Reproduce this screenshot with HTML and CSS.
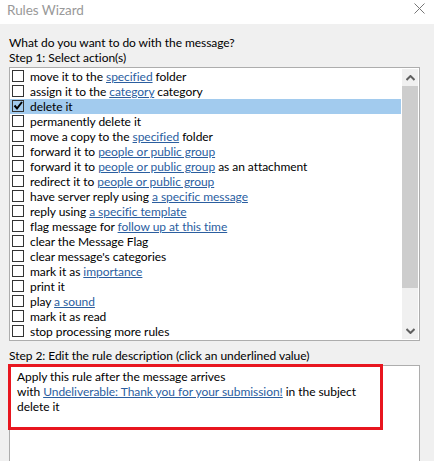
FILE: index.html
```html
<!DOCTYPE html>
<html>
<head>
<meta name="viewport" content="width=device-width, initial-scale=1">
<link rel="stylesheet" href="styles.css">
</head>
<body>

<div class="titlebar">
  <span class="title">Rules Wizard</span>
  <span class="closeBtn">
    <svg width="11" height="11" viewBox="0 0 11 11"><path d="M0.5 0.5 L10.5 10.5 M10.5 0.5 L0.5 10.5" stroke="#777" stroke-width="1" fill="none"/></svg>
  </span>
</div>

<div class="content">
  <div class="label">What do you want to do with the message?</div>
  <div class="label">Step 1: Select action(s)</div>

  <div class="listbox">
    <ul class="actions">
      <li><span class="check"></span>move it to the <a>specified</a> folder</li>
      <li><span class="check"></span>assign it to the <a>category</a> category</li>
      <li class="selected"><span class="check"><svg width="10" height="10" viewBox="0 0 10 10"><path d="M1.5 4.5 L4 7.5 L9 1" stroke="#000" stroke-width="2" fill="none"/></svg></span>delete it</li>
      <li><span class="check"></span>permanently delete it</li>
      <li><span class="check"></span>move a copy to the <a>specified</a> folder</li>
      <li><span class="check"></span>forward it to <a>people or public group</a></li>
      <li><span class="check"></span>forward it to <a>people or public group</a> as an attachment</li>
      <li><span class="check"></span>redirect it to <a>people or public group</a></li>
      <li><span class="check"></span>have server reply using <a>a specific message</a></li>
      <li><span class="check"></span>reply using <a>a specific template</a></li>
      <li><span class="check"></span>flag message for <a>follow up at this time</a></li>
      <li><span class="check"></span>clear the Message Flag</li>
      <li><span class="check"></span>clear message's categories</li>
      <li><span class="check"></span>mark it as <a>importance</a></li>
      <li><span class="check"></span>print it</li>
      <li><span class="check"></span>play <a>a sound</a></li>
      <li><span class="check"></span>mark it as read</li>
      <li><span class="check"></span>stop processing more rules</li>
    </ul>
    <div class="scrollbar">
      <div class="arrow">
        <svg width="9" height="6" viewBox="0 0 9 6"><path d="M0.5 5 L4.5 1 L8.5 5" stroke="#606060" stroke-width="2" fill="none"/></svg>
      </div>
      <div class="thumb"></div>
      <div class="track"></div>
      <div class="arrow">
        <svg width="9" height="6" viewBox="0 0 9 6"><path d="M0.5 1 L4.5 5 L8.5 1" stroke="#606060" stroke-width="2" fill="none"/></svg>
      </div>
    </div>
  </div>

  <div class="label step2">Step 2: Edit the rule description (click an underlined value)</div>

  <div class="descbox">
    <div class="desc">
      <div>Apply this rule after the message arrives</div>
      <div>with <a>Undeliverable: Thank you for your submission!</a> in the subject</div>
      <div>delete it</div>
    </div>
    <div class="highlight"></div>
  </div>
</div>

</body>
</html>
```

FILE: styles.css
```css
* {
  box-sizing: border-box;
}

body {
  margin: 0;
  width: 434px;
  height: 461px;
  overflow: hidden;
  background: #f0f0f0;
  font-family: Lato, "Noto Sans", sans-serif;
  font-size: 12px;
  letter-spacing: -0.05px;
  color: #000;
}

/* window title */
.titlebar {
  height: 24px;
  background: #fff;
  display: flex;
  align-items: center;
  justify-content: space-between;
  padding: 0 9px 0 7px;
}

.title {
  color: #999;
  font-size: 13.5px;
  margin-top: -4px;
}

.closeBtn {
  display: flex;
  margin-top: -8px;
}

.content {
  padding: 11px 14px 0 9px;
}

.label {
  line-height: 15px;
  height: 15px;
  white-space: nowrap;
}

a {
  color: #2b5e9f;
  text-decoration: underline;
}

/* Step 1 list */
.listbox {
  margin-top: 2px;
  height: 274px;
  background: #fff;
  border: 1px solid #adadad;
  display: flex;
}

.actions {
  list-style: none;
  margin: 0;
  padding: 1px 0 0 0;
  flex: 1;
}

.actions li {
  height: 15px;
  line-height: 15px;
  white-space: nowrap;
  padding-left: 2px;
}

.actions li.selected {
  background: #a2cbee;
}

.check {
  display: inline-block;
  vertical-align: top;
  width: 12px;
  height: 12px;
  margin-top: 1px;
  border: 1px solid #333;
  background: #fff;
  margin-right: 6px;
}

.check svg {
  display: block;
}

.selected .check {
  background: transparent;
}

.scrollbar {
  width: 17px;
  display: flex;
  flex-direction: column;
  background: #f0f0f0;
  border-left: 1px solid #fff;
  margin: 1px 1px 1px 0;
}

.arrow {
  height: 17px;
  display: flex;
  align-items: center;
  justify-content: center;
}

.thumb {
  height: 202px;
  background: #cdcdcd;
}

.track {
  flex: 1;
}

/* Step 2 */
.step2 {
  margin-top: 7px;
}

.descbox {
  position: relative;
  margin-top: 2px;
  height: 96px;
  background: #fff;
  border: 1px solid #adadad;
  border-bottom: 0;
}

.desc {
  padding: 3px 0 0 7px;
  line-height: 15px;
  white-space: nowrap;
}

/* red annotation box drawn over the description */
.highlight {
  position: absolute;
  left: -2px;
  top: -2px;
  width: 375px;
  height: 66px;
  border: 3px solid #e8161f;
}
```
